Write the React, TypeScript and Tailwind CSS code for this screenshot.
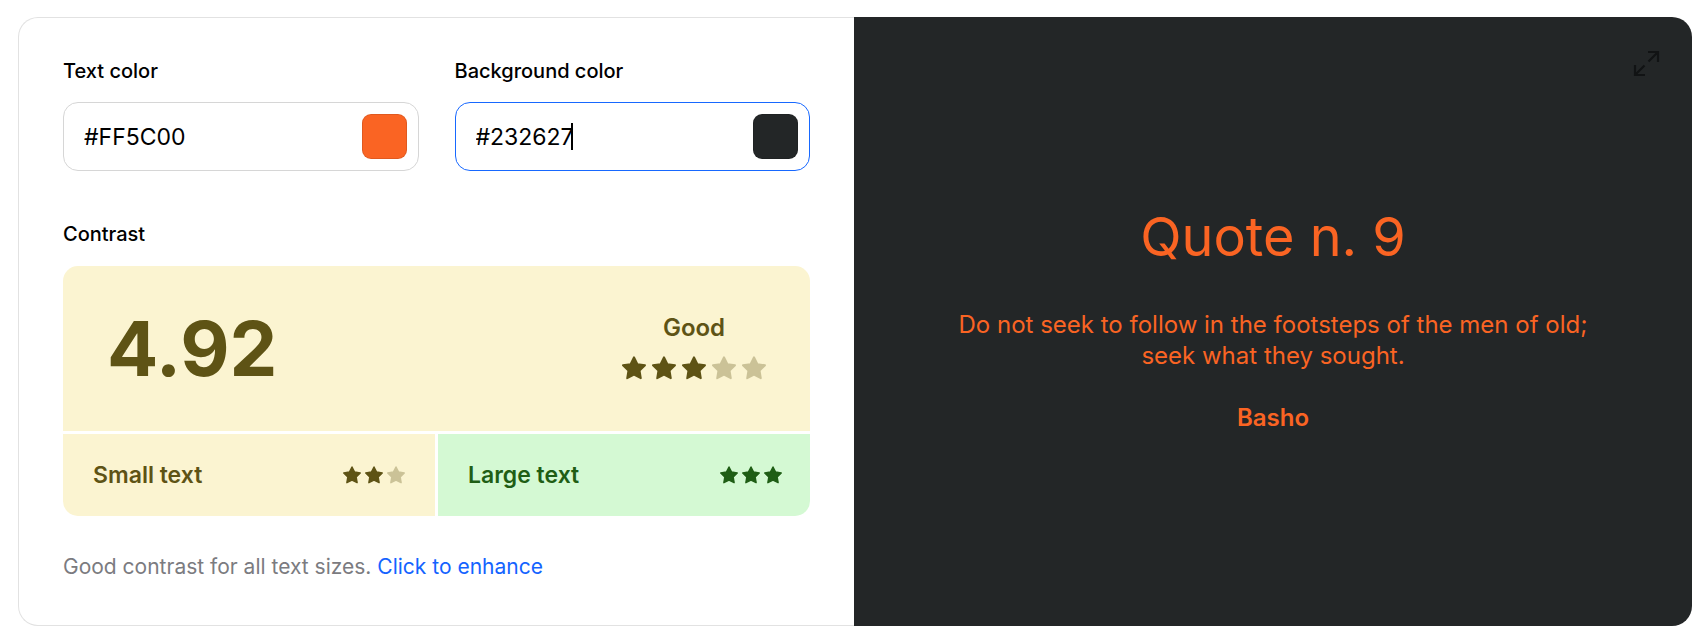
import { useState } from "react";

function Star({ filled, className }: { filled: boolean; className: string }) {
  return (
    <svg viewBox="0.6 0.6 22.8 22.8" aria-hidden="true" className={`${className} ${filled ? "" : "opacity-30"}`}>
      <path
        d="M12 1.8 15.29 8.27 22.46 9.4 17.33 14.53 18.47 21.7 12 18.4 5.53 21.7 6.67 14.53 1.54 9.4 8.71 8.27Z"
        fill="currentColor"
        stroke="currentColor"
        strokeWidth="1.8"
        strokeLinejoin="round"
      />
    </svg>
  );
}

function Stars({ score, total, large = false }: { score: number; total: number; large?: boolean }) {
  return (
    <div role="img" aria-label={`${score} of ${total} stars`} className={large ? "flex gap-1.5" : "flex gap-1"}>
      {Array.from({ length: total }, (_, i) => (
        <Star key={i} filled={i < score} className={large ? "size-6" : "size-[18px]"} />
      ))}
    </div>
  );
}

function ColorField({ id, label, initial, swatch, active = false }: {
  id: string;
  label: string;
  initial: string;
  swatch: string;
  active?: boolean;
}) {
  const [value, setValue] = useState(initial);
  return (
    <div>
      <label htmlFor={id} className="block text-xl leading-6 font-medium">{label}</label>
      <div className={`relative mt-[19px] flex h-[69px] items-center rounded-[15px] border pr-[11px] pl-5 ${active ? "border-[#1768ff]" : "border-[#d6d6d6]"}`}>
        <input
          id={id}
          value={value}
          onChange={(e) => setValue(e.target.value)}
          className="h-9 min-w-0 flex-1 bg-transparent text-[23px] caret-transparent outline-none"
        />
        {active && <span className="absolute left-[115px] h-[27px] w-0.5 bg-black" />}
        <button type="button" aria-label={`Pick ${label.toLowerCase()}`} className={`size-[45px] rounded-[9px] border border-black/10 ${swatch}`} />
      </div>
    </div>
  );
}

export default function App() {
  return (
    <main className="bg-white pt-[17px] pr-[9px] pb-[15px] pl-[18px] font-['Inter',sans-serif] text-black">
      <div className="grid grid-cols-[836fr_838fr]">
        <section className="rounded-l-[20px] border border-r-0 border-[#e2e2e2] pt-[41px] pr-11 pb-[44px] pl-11">
          <div className="grid grid-cols-2 gap-9">
            <ColorField id="text-color" label="Text color" initial="#FF5C00" swatch="bg-[#fa6423]" />
            <ColorField id="background-color" label="Background color" initial="#232627" swatch="bg-[#232627]" active />
          </div>

          <h2 className="mt-[51px] text-xl leading-6 font-medium">Contrast</h2>
          <div className="mt-5 grid grid-cols-2 gap-[3px] overflow-hidden rounded-[15px] font-semibold text-[#5e5315]">
            <div className="col-span-2 flex h-[165px] items-center justify-between bg-[#fbf4d1] pr-11 pb-0.5 pl-11">
              <span className="text-[76px] leading-none font-bold">4.92</span>
              <div className="flex flex-col items-center gap-3 pb-1">
                <span className="text-2xl leading-8">Good</span>
                <Stars score={3} total={5} large />
              </div>
            </div>
            <div className="flex h-[82px] items-center justify-between bg-[#fbf4d1] px-[30px]">
              <span className="text-[23px]">Small text</span>
              <Stars score={2} total={3} />
            </div>
            <div className="flex h-[82px] items-center justify-between bg-[#d4f9d3] pr-7 pl-[30px] text-[#1f5e15]">
              <span className="text-[23px]">Large text</span>
              <Stars score={3} total={3} />
            </div>
          </div>

          <p className="mt-[37px] text-[21px] leading-7 text-[#7b7b80]">
            Good contrast for all text sizes.{" "}
            <a href="#enhance" className="text-[#1463ff]">Click to enhance</a>
          </p>
        </section>

        <section className="relative flex flex-col items-center justify-center rounded-r-[20px] bg-[#232627] px-24 pb-1.5 text-center text-2xl leading-[31px] text-[#fa6423]">
          <button type="button" aria-label="Full screen" className="absolute top-[33px] right-8 text-[#111314]">
            <svg viewBox="0 0 27 27" className="size-[27px]" fill="none" stroke="currentColor" strokeWidth="2.2">
              <path d="M15 2H25V12M25 2 15.5 11.5M2 15V25H12M2 25 11.5 15.5" />
            </svg>
          </button>
          <h1 className="text-[54px] leading-[64px]">Quote n. 9</h1>
          <p className="mt-10">Do not seek to follow in the footsteps of the men of old; seek what they sought.</p>
          <p className="mt-[31px] font-semibold">Basho</p>
        </section>
      </div>
    </main>
  );
}
